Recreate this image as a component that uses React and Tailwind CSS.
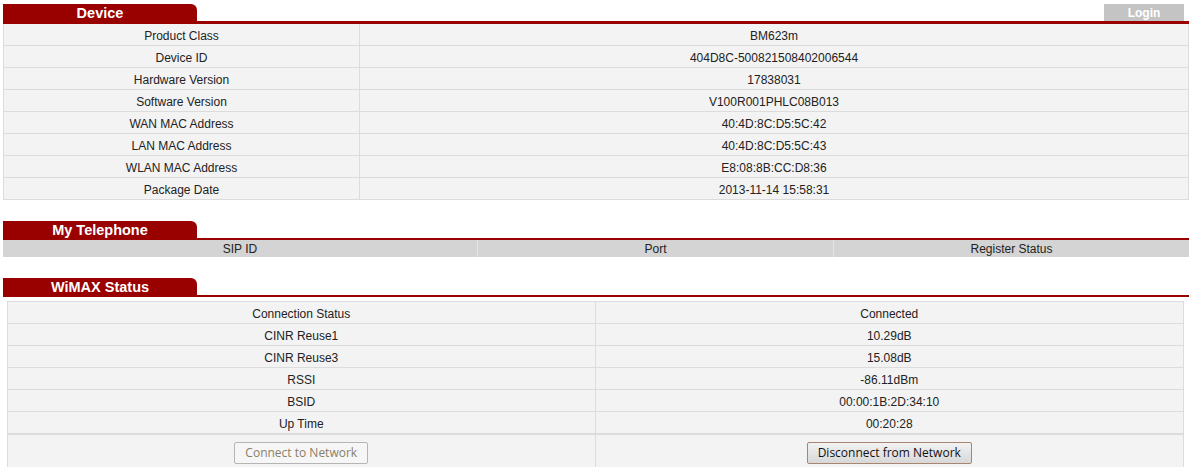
const device = [
  ['Product Class', 'BM623m'],
  ['Device ID', '404D8C-500821508402006544'],
  ['Hardware Version', '17838031'],
  ['Software Version', 'V100R001PHLC08B013'],
  ['WAN MAC Address', '40:4D:8C:D5:5C:42'],
  ['LAN MAC Address', '40:4D:8C:D5:5C:43'],
  ['WLAN MAC Address', 'E8:08:8B:CC:D8:36'],
  ['Package Date', '2013-11-14 15:58:31'],
];

const wimax = [
  ['Connection Status', 'Connected'],
  ['CINR Reuse1', '10.29dB'],
  ['CINR Reuse3', '15.08dB'],
  ['RSSI', '-86.11dBm'],
  ['BSID', '00:00:1B:2D:34:10'],
  ['Up Time', '00:20:28'],
];

// Red tab with rounded top-right corner
const Tab = ({ title }) => (
  <div className="w-[194px] h-[17px] bg-[#990000] rounded-tr-[6px] text-white font-bold text-[14.5px] leading-[18px] text-center">
    {title}
  </div>
);

const App = () => {
  return (
    <div className="w-[1195px] h-[467px] overflow-hidden bg-white pt-[4px] px-[3px] text-[12px] text-[#222] font-['Liberation_Sans',Arial,sans-serif]">
      <div className="w-[1186px]">
        {/* Device */}
        <div className="flex justify-between items-end">
          <Tab title="Device" />
          <div className="w-[80px] h-[17px] mr-[5px] bg-[#c4c4c4] text-white font-bold text-[12px] leading-[18px] text-center">
            Login
          </div>
        </div>
        <div className="h-[3px] bg-[#990000]" />
        <div className="border border-[#dcdcdc] border-t-0 border-b-0 bg-[#f3f3f3]">
          {device.map(([k, v]) => (
            <div key={k} className="flex h-[22px] leading-[24px] border-b border-[#dcdcdc]">
              <div className="w-[356px] text-center border-r border-[#dcdcdc]">{k}</div>
              <div className="flex-1 text-center">{v}</div>
            </div>
          ))}
        </div>

        {/* My Telephone */}
        <div className="mt-[21px]">
          <Tab title="My Telephone" />
        </div>
        <div className="h-[2px] bg-[#990000]" />
        <div className="flex h-[17px] leading-[19px] bg-[#d4d4d4]">
          <div className="w-[475px] text-center border-r border-[#e4e4e4]">SIP ID</div>
          <div className="w-[356px] text-center border-r border-[#e4e4e4]">Port</div>
          <div className="flex-1 text-center">Register Status</div>
        </div>

        {/* WiMAX Status */}
        <div className="mt-[21px]">
          <Tab title="WiMAX Status" />
        </div>
        <div className="h-[2px] bg-[#990000]" />
        <div className="pt-[4px] pl-[4px] pr-[5px]">
          <div className="border border-[#dcdcdc] bg-[#f3f3f3]">
            {wimax.map(([k, v]) => (
              <div key={k} className="flex h-[22px] leading-[24px] border-b border-[#dcdcdc]">
                <div className="w-1/2 text-center border-r border-[#dcdcdc]">{k}</div>
                <div className="w-1/2 text-center">{v}</div>
              </div>
            ))}
            <div className="flex h-[36px] border-t border-[#dcdcdc]">
              <div className="w-1/2 flex justify-center items-center border-r border-[#dcdcdc]">
                <button
                  disabled
                  className="h-[22px] px-[10px] rounded-[2px] border border-[#b5b5b5] bg-[#f6f6f6] text-[#8a7f66] text-[12px] font-['Open_Sans',sans-serif] leading-[20px]"
                >
                  Connect to Network
                </button>
              </div>
              <div className="w-1/2 flex justify-center items-center">
                <button className="h-[22px] px-[10px] rounded-[2px] border border-[#a88570] bg-gradient-to-b from-[#f2f2f2] to-[#d8d8d8] text-[#111] text-[12px] font-['Open_Sans',sans-serif] leading-[20px]">
                  Disconnect from Network
                </button>
              </div>
            </div>
          </div>
        </div>
      </div>
    </div>
  );
};

export default App;
